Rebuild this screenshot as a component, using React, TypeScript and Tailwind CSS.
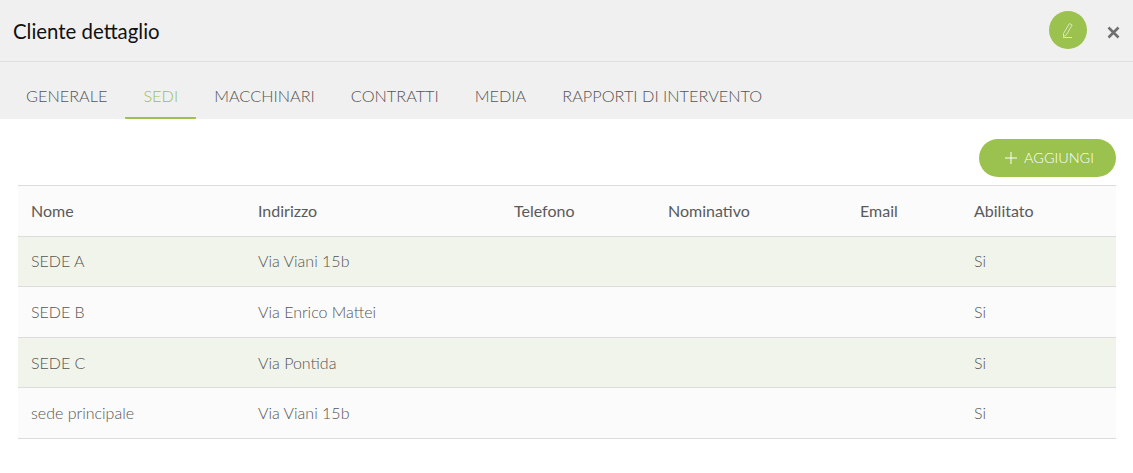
import React from "react";

const tabs = ["GENERALE", "SEDI", "MACCHINARI", "CONTRATTI", "MEDIA", "RAPPORTI DI INTERVENTO"];
const cols = ["Nome", "Indirizzo", "Telefono", "Nominativo", "Email", "Abilitato"];
const widths = [227, 256, 154, 192, 114, 155];
const rows = [
  { cells: ["SEDE A", "Via Viani 15b"], cls: "h-[50px] bg-[#f1f4ea] border-b border-[#dcdcdc]", td: "px-[13px] font-light pb-[1px]" },
  { cells: ["SEDE B", "Via Enrico Mattei"], cls: "h-[51px] bg-[#fbfbfb] border-b border-[#dcdcdc]", td: "px-[13px] font-light pb-[1px]" },
  { cells: ["SEDE C", "Via Pontida"], cls: "h-[50px] bg-[#f1f4ea] border-b border-[#dcdcdc]", td: "px-[13px] font-light" },
  { cells: ["sede principale", "Via Viani 15b"], cls: "h-[51px] bg-[#fbfbfb] border-b border-[#dcdcdc]", td: "px-[13px] font-light pb-[1px]" },
];

export default function App() {
  return (
    <div className="w-[1133px] h-[473px] bg-white font-['Lato',sans-serif] overflow-hidden">
      <header className="h-[62px] bg-[#f0f0f0] border-b border-[#e0e0e0] flex items-center pl-[13px] pr-[13px]">
        <h1 className="text-[20.4px] leading-[24px] text-[#111] flex-1">Cliente dettaglio</h1>
        <button className="w-[38px] h-[38px] rounded-full bg-[#9bc14f] flex items-center justify-center mr-[20px] -mt-[2px]">
          <svg width="16" height="18" viewBox="0 0 16 18" fill="none" stroke="#dbe8bd" strokeWidth="1">
            <path d="M3.5 12.5 L9.5 2.5 L12.2 4 L6.3 14 L3.5 15.5 Z" />
            <path d="M3 16.5 H12" />
          </svg>
        </button>
        <svg width="13" height="13" viewBox="0 0 13 13" stroke="#6f6f6f" strokeWidth="2.6" className="mt-[3px]">
          <path d="M1.5 1.5 L11.5 11.5 M11.5 1.5 L1.5 11.5" />
        </svg>
      </header>
      <nav className="h-[57px] bg-[#f0f0f0] flex items-stretch pl-[8px]">
        {tabs.map((t) => (
          <div
            key={t}
            className={
              t === "SEDI"
                ? "px-[18px] pt-[24px] text-[16.3px] leading-[20px] font-light text-[#9bc14f] border-b-2 border-[#9bc14f] rounded-b-[1px]"
                : "px-[18px] pt-[24px] text-[16.3px] leading-[20px] font-light text-[#555]"
            }
          >
            {t}
          </div>
        ))}
      </nav>
      <main className="px-[18px] pr-[17px] pt-[20px]">
        <div className="flex justify-end h-[46px]">
          <button className="w-[137px] h-[38px] pl-[4px] rounded-full bg-[#9bc14f] text-white text-[14.4px] font-light flex items-center justify-center gap-[7px]">
            <svg width="12" height="12" viewBox="0 0 12 12" stroke="#fff" strokeWidth="1">
              <path d="M6 0 V12 M0 6 H12" />
            </svg>
            AGGIUNGI
          </button>
        </div>
        <table className="w-[1098px] table-fixed border-collapse text-[16px] text-[#555]">
          <colgroup>
            {widths.map((w, i) => (
              <col key={i} style={{ width: w }} />
            ))}
          </colgroup>
          <thead>
            <tr className="h-[51px] bg-[#fbfbfb] border-y border-[#dcdcdc]">
              {cols.map((c) => (
                <th key={c} className="px-[13px] text-left font-normal text-[#5a5a5a]">
                  {c}
                </th>
              ))}
            </tr>
          </thead>
          <tbody>
            {rows.map((r, i) => (
              <tr key={i} className={r.cls}>
                <td className={r.td}>{r.cells[0]}</td>
                <td className={r.td}>{r.cells[1]}</td>
                <td />
                <td />
                <td />
                <td className={r.td}>Si</td>
              </tr>
            ))}
          </tbody>
        </table>
      </main>
    </div>
  );
}
